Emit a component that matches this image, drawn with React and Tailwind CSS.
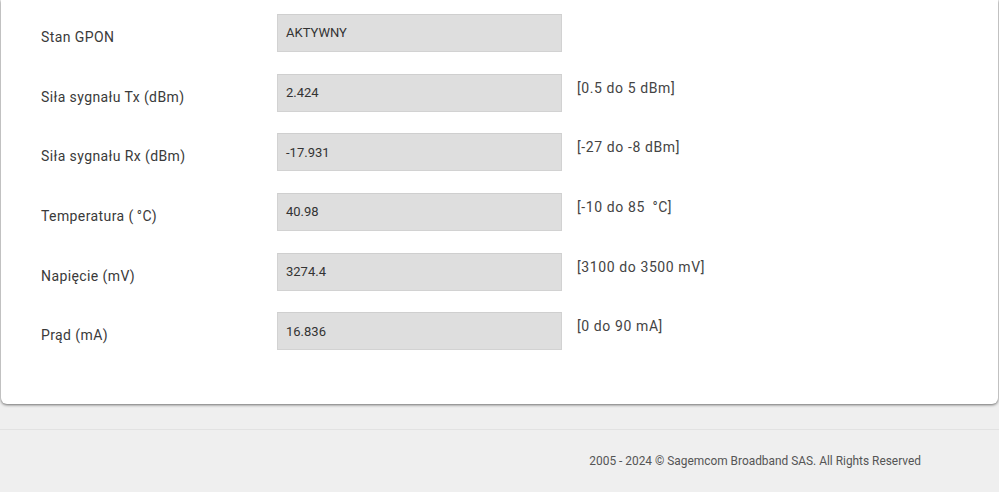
import React from "react";

const rows = [
  { label: "Stan GPON", value: "AKTYWNY", hint: "" },
  { label: "Siła sygnału Tx (dBm)", value: "2.424", hint: "[0.5 do 5 dBm]" },
  { label: "Siła sygnału Rx (dBm)", value: "-17.931", hint: "[-27 do -8 dBm]" },
  { label: "Temperatura (\u2009°C)", value: "40.98", hint: "[-10 do 85\u00a0\u2009°C]" },
  { label: "Napięcie (mV)", value: "3274.4", hint: "[3100 do 3500 mV]" },
  { label: "Prąd (mA)", value: "16.836", hint: "[0 do 90 mA]" },
];

const App = () => {
  return (
    <div
      className="min-h-screen bg-[#efefef] flex flex-col"
      style={{ fontFamily: "Roboto, 'Liberation Sans', sans-serif" }}
    >
      {/* Card */}
      <div className="mx-[1px] bg-white rounded-b-[6px] shadow-[0_1px_3px_rgba(0,0,0,0.55)] pt-[14px] pb-[54px]">
        <div className="flex flex-col gap-[21.7px]">
          {rows.map((row) => (
            <div key={row.label} className="flex items-start">
              <div className="w-[276px] pl-[40px] pt-[13px] text-[14px] tracking-[0.4px] text-[#3a3a3a]">
                {row.label}
              </div>
              <div className="w-[285px] h-[38px] bg-[#dedede] border border-[#d2d2d2] border-t-[#cfcfcf] flex items-center pl-[8px] text-[13px] text-[#333]">
                {row.value}
              </div>
              <div className="pl-[15px] pt-[4px] text-[14px] tracking-[0.6px] text-[#444]">
                {row.hint}
              </div>
            </div>
          ))}
        </div>
      </div>

      {/* Footer */}
      <div className="mt-[25px] border-t border-[#e2e2e2] flex-1 flex justify-end pr-[78px] pt-[23px] pb-[23px]">
        <p className="text-[11.9px] text-[#555]">
          2005 - 2024 © Sagemcom Broadband SAS. All Rights Reserved
        </p>
      </div>
    </div>
  );
};

export default App;
